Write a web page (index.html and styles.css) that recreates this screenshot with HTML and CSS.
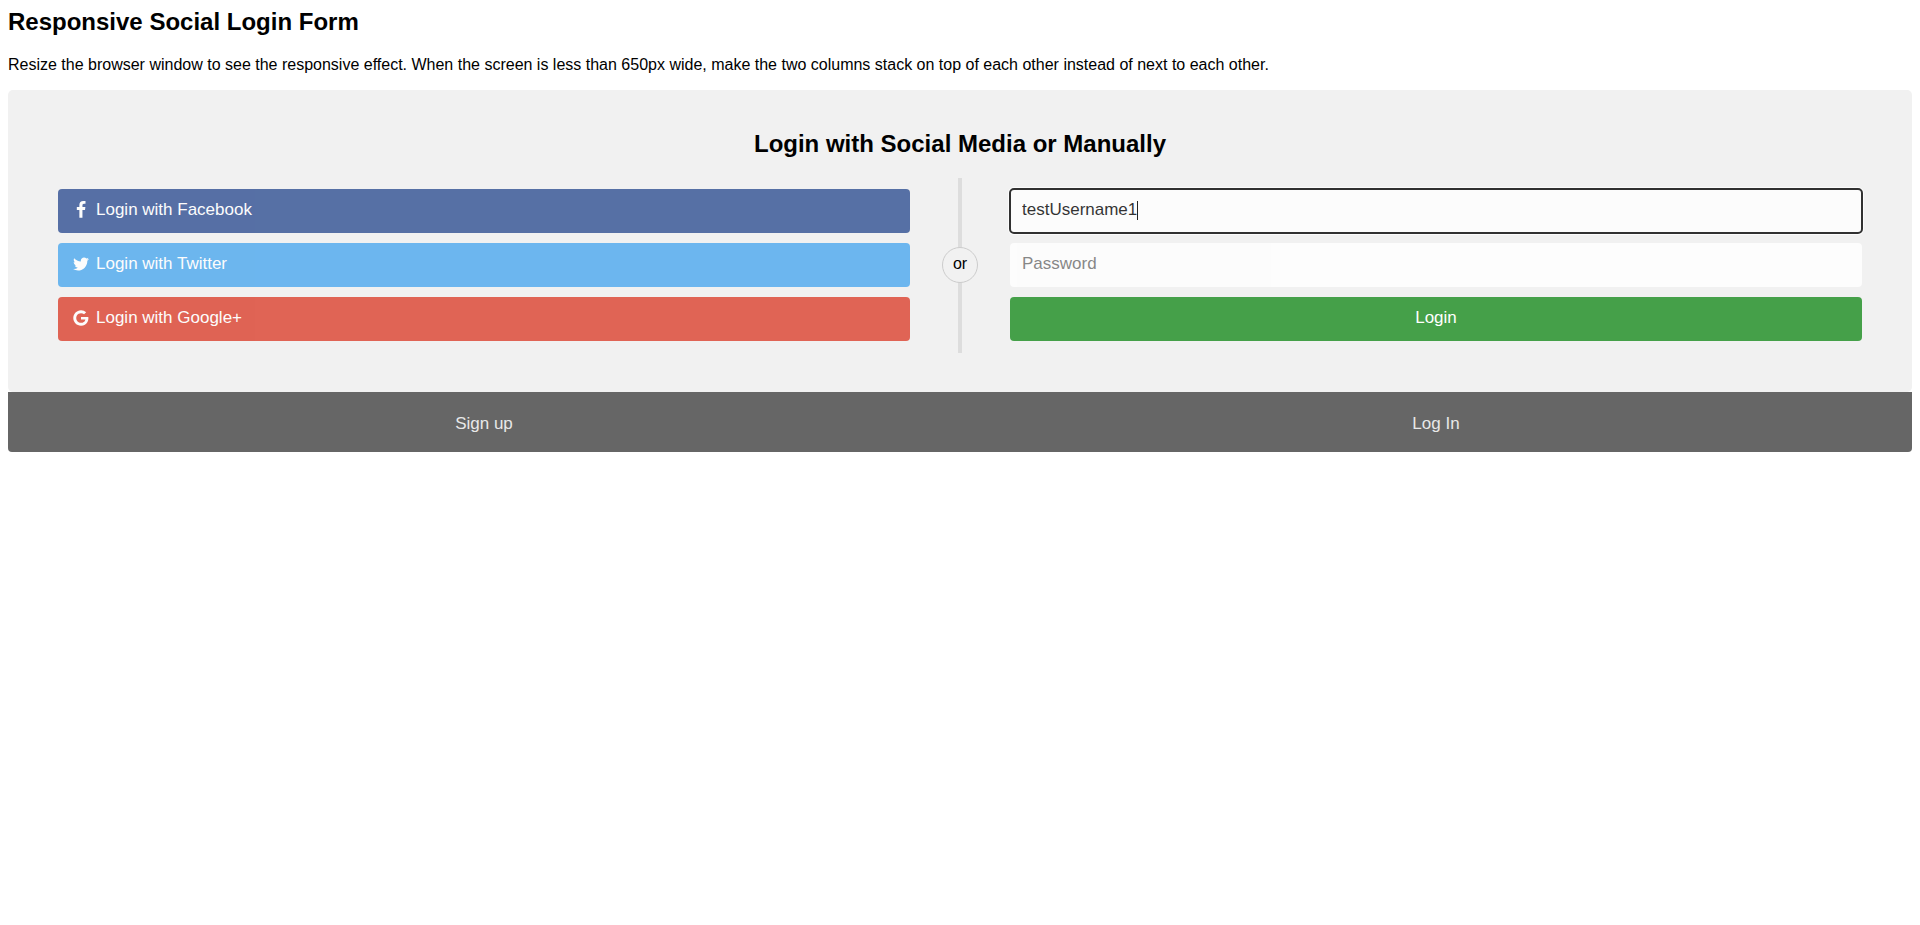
FILE: index.html
```html
<!DOCTYPE html>
<html lang="en">
<head>
<meta charset="utf-8">
<meta name="viewport" content="width=device-width, initial-scale=1">
<title>Responsive Social Login Form</title>
<link rel="stylesheet" href="styles.css">
</head>
<body>
<h2 class="title">Responsive Social Login Form</h2>
<p class="intro">Resize the browser window to see the responsive effect. When the screen is less than 650px wide, make the two columns stack on top of each other instead of next to each other.</p>

<main class="container">
  <h2 class="title">Login with Social Media or Manually</h2>
  <form class="row">
    <div class="col">
      <a href="#" class="btn fb">
        <svg class="icon" viewBox="0 -1536 1792 1792" aria-hidden="true"><path transform="translate(384 0) scale(1 -1)" d="M959 1524v-264h-157q-86 0 -116 -36t-30 -108v-189h293l-39 -296h-254v-759h-306v759h-255v296h255v218q0 186 104 288.500t277 102.500q147 0 228 -12z"/></svg>
        Login with Facebook
      </a>
      <a href="#" class="btn twitter">
        <svg class="icon" viewBox="0 -1536 1792 1792" aria-hidden="true"><path transform="translate(64 0) scale(1 -1)" d="M1620 1128q-67 -98 -162 -167q1 -14 1 -42q0 -130 -38 -259.500t-115.500 -248.500t-184.500 -210.500t-258 -146t-323 -54.500q-271 0 -496 145q35 -4 78 -4q225 0 401 138q-105 2 -188 64.500t-114 159.500q33 -5 61 -5q43 0 85 11q-112 23 -185.500 111.500t-73.500 205.500v4q68 -38 146 -41q-66 44 -105 115t-39 154q0 88 44 163q121 -149 294.500 -238.500t371.500 -99.500q-8 38 -8 74q0 134 94.500 228.500t228.500 94.500q140 0 236 -102q109 21 205 78q-37 -115 -142 -178q93 10 186 50z"/></svg>
        Login with Twitter
      </a>
      <a href="#" class="btn google">
        <svg class="icon" viewBox="0 -1536 1792 1792" aria-hidden="true"><path transform="translate(128 0) scale(1 -1)" d="M768 750h725q12 -67 12 -128q0 -217 -91 -387.500t-259.500 -266.500t-386.500 -96q-157 0 -299 60.500t-245 163.500t-163.500 245t-60.500 299t60.500 299t163.500 245t245 163.500t299 60.500q300 0 515 -201l-209 -201q-123 119 -306 119q-129 0 -238.500 -65t-173.500 -176.500t-64 -243.500t64 -243.500t173.500 -176.500t238.500 -65q87 0 160 24t120 60t82 82t51.500 87t22.500 78h-436v264z"/></svg>
        Login with Google+
      </a>
    </div>
    <div class="divider"><span class="divider-text">or</span></div>
    <div class="col">
      <div class="field">
        <input class="input active" type="text" name="username" placeholder="Username" aria-label="Username" value="testUsername1">
        <span class="caret"></span>
      </div>
      <input class="input" type="password" name="password" placeholder="Password" aria-label="Password">
      <button class="btn submit" type="button">Login</button>
    </div>
  </form>
</main>

<nav class="bottom">
  <a href="#" class="bottom-link">Sign up</a>
  <a href="#" class="bottom-link">Log In</a>
</nav>
</body>
</html>
```

FILE: styles.css
```css
* {
  box-sizing: border-box;
}

body {
  margin: 8px;
  background: #fff;
  color: #000;
  font-family: Arial, "Liberation Sans", Helvetica, sans-serif;
  font-size: 16px;
  line-height: 18px;
}

.title {
  margin: 0 0 20px;
  font-size: 24px;
  line-height: 28px;
}

.intro {
  margin: 0 0 16px;
}

.container {
  padding: 40px 0 39px;
  border-radius: 5px;
  background: #f1f1f1;
}

.container .title {
  text-align: center;
}

.row {
  display: grid;
  grid-template-columns: 1fr 4px 1fr;
}

.col {
  display: flex;
  flex-direction: column;
  gap: 10px;
  padding: 11px 48px 12px 50px;
}

.divider + .col {
  padding: 11px 50px 12px 48px;
}

.divider {
  display: flex;
  align-items: center;
  justify-content: center;
  padding-bottom: 1px;
  background: #ddd;
}

.divider-text {
  flex: none;
  width: 36px;
  height: 36px;
  border: 1px solid #ccc;
  border-radius: 50%;
  background: #f1f1f1;
  line-height: 32px;
  text-align: center;
}

.btn,
.input {
  width: 100%;
  height: 44px;
  padding: 11px 12px 13px;
  border: 0;
  border-radius: 4px;
  font-family: inherit;
  font-size: 17px;
  line-height: 20px;
  text-decoration: none;
  opacity: 0.85;
}

.btn {
  display: flex;
  align-items: center;
  gap: 4px;
  color: #fff;
}

.icon {
  width: 22px;
  height: 18px;
  fill: currentColor;
}

.fb {
  background: #3b5998;
}

.twitter {
  background: #55acee;
}

.google {
  background: #dd4b39;
}

.submit {
  justify-content: center;
  background: #45a049;
  opacity: 1;
}

.input {
  display: block;
  background: #fff;
  color: #111;
}

.input::placeholder {
  color: #757575;
}

.active {
  outline: 2px solid #101010;
  outline-offset: -1px;
  box-shadow: 0 0 0 2px #fff;
}

.field {
  position: relative;
}

.caret {
  position: absolute;
  top: 12px;
  left: 127px;
  width: 1px;
  height: 19px;
  background: #242424;
}

.bottom {
  display: grid;
  grid-template-columns: 1fr 1fr;
  border-radius: 0 0 4px 4px;
  background: #666;
}

.bottom-link {
  padding: 22px 12px 18px;
  color: #fff;
  font-size: 17px;
  line-height: 20px;
  text-align: center;
  text-decoration: none;
  opacity: 0.85;
}

@media (max-width: 650px) {
  .row {
    grid-template-columns: 1fr;
  }

  .divider {
    background: none;
  }

  .col,
  .divider + .col {
    padding: 12px 20px;
  }
}
```
